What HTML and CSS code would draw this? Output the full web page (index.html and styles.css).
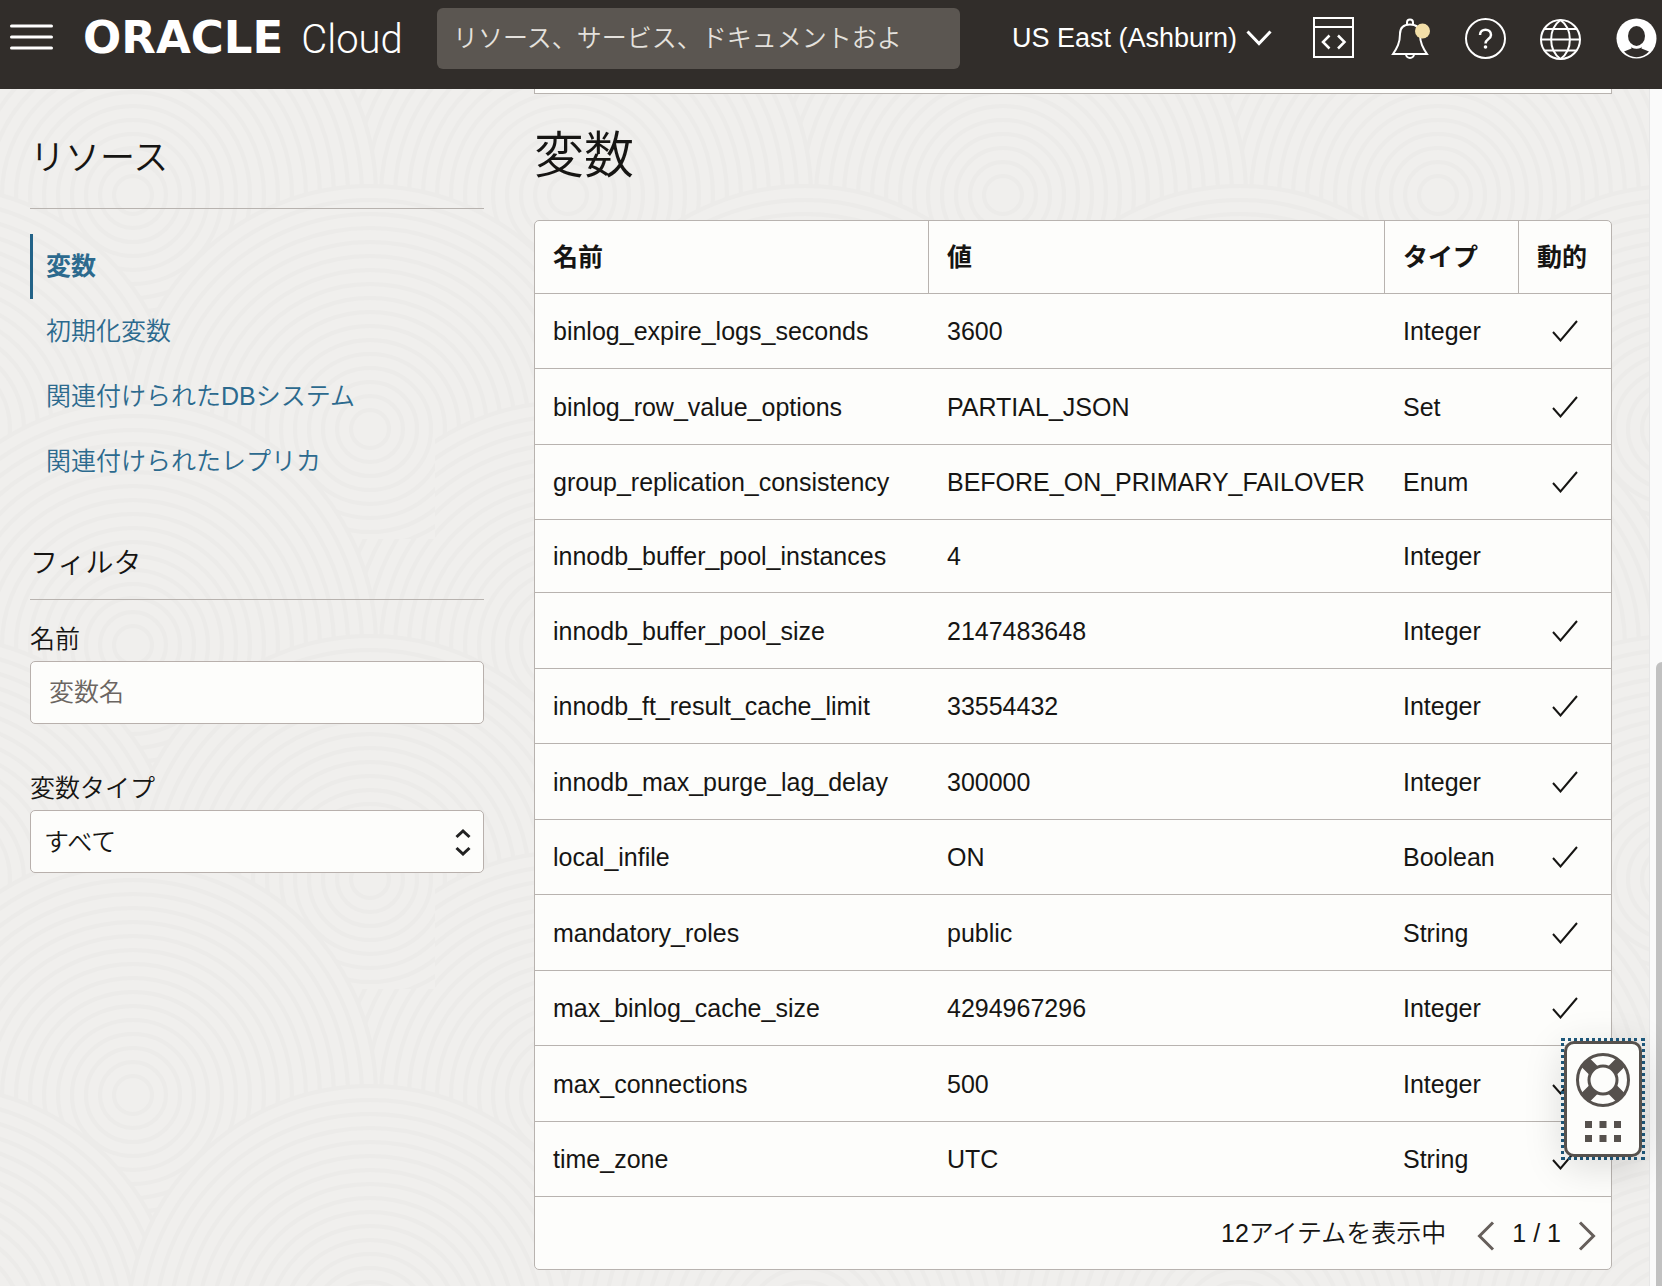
FILE: index.html
```
<!DOCTYPE html>
<html lang="ja">
	<head>
		<meta charset="utf-8" />
		<meta name="viewport" content="width=device-width, initial-scale=1" />
		<title>変数 | Oracle Cloud</title>
		<link rel="stylesheet" href="styles.css">
	</head>
	<body>
		<header class="topbar">
			<button class="icon-button menu" aria-label="メニュー">
				<svg width="43" height="27" viewBox="0 0 43 27" stroke="#fff" stroke-width="3" stroke-linecap="round">
					<path d="M1.5 2h40M1.5 13h40M1.5 24h40" />
				</svg>
			</button>
			<a class="logo" href="#"><span class="logo-oracle">ORACLE</span><span class="logo-cloud">Cloud</span></a>
			<input class="search" type="text" aria-label="検索" placeholder="リソース、サービス、ドキュメントおよ" />
			<div class="tools">
				<button class="region">
					US East (Ashburn)
					<svg width="26" height="16" viewBox="0 0 26 16" fill="none" stroke="#fff" stroke-width="3">
						<path d="M1.500 1.500L13 13.500L24.500 1.500" />
					</svg>
				</button>
				<button class="icon-button" aria-label="開発者ツール">
					<svg width="44" height="44" viewBox="0 0 44 44" fill="none" stroke="#fff" stroke-width="2">
						<path d="M1 2H40V41H1Z" />
						<path d="M1 11H40" />
						<path d="M16.500 19.500L10 26L16.500 32.500M25 19.500L31.500 26L25 32.500" stroke-width="2.500" />
					</svg>
				</button>
				<button class="icon-button" aria-label="お知らせ">
					<svg width="42" height="44" viewBox="0 0 42 44" fill="none" stroke="#fff" stroke-width="2">
						<path d="M17 9V6.500a2.500 2.500 0 0 1 6 0V9" />
						<path d="M10 18C10 11 14 8.500 20 8.500S30 11 30 18C30 27 33 32 37 38H3C7 32 10 27 10 18Z" />
						<path d="M16 38a4 4 0 0 0 8 0" />
						<circle cx="32.500" cy="15" r="7.500" fill="#f3dfa8" stroke="none" />
					</svg>
				</button>
				<button class="icon-button" aria-label="ヘルプ">
					<svg width="42" height="44" viewBox="0 0 42 44" fill="none" stroke="#fff" stroke-width="2">
						<circle cx="20.500" cy="22.500" r="19.500" />
						<path d="M15 19c0-7 11-7 11 0c0 4-5.500 4-5.500 8.500" stroke-width="2.500" />
						<circle cx="20.500" cy="31" r="1.800" fill="#fff" stroke="none" />
					</svg>
				</button>
				<button class="icon-button" aria-label="言語">
					<svg width="42" height="44" viewBox="0 0 42 44" fill="none" stroke="#fff" stroke-width="2">
						<circle cx="20.500" cy="23.500" r="19.500" />
						<path d="M20.500 4C8 13 8 34 20.500 43M20.500 4C33 13 33 34 20.500 43" />
						<path d="M4.500 13H36.500M1 23.500H40M4.500 34.500H36.500" />
					</svg>
				</button>
				<button class="icon-button" aria-label="プロファイル">
					<svg width="42" height="44" viewBox="0 0 42 44">
						<circle cx="21.500" cy="22.500" r="20" fill="#fff" />
						<ellipse cx="21.500" cy="20" rx="8.500" ry="10" fill="#312d2a" />
						<path d="M9 35.500L16.500 32.500V30C19 33 24 33 26.500 30V32.500L34 35.500C27 43 16 43 9 35.500Z" fill="#312d2a" />
						<path d="M16 28C17 33 26 33 27 28" fill="none" stroke="#fff" stroke-width="2" />
					</svg>
				</button>
			</div>
		</header>

		<div class="page">
			<aside class="sidebar">
				<h2 class="resources-title">リソース</h2>
				<nav class="resources">
					<a class="active" href="#">変数</a>
					<a href="#">初期化変数</a>
					<a href="#">関連付けられたDBシステム</a>
					<a href="#">関連付けられたレプリカ</a>
				</nav>
				<h3 class="filter-title">フィルタ</h3>
				<div class="field">
					<label for="name">名前</label>
					<input id="name" type="text" placeholder="変数名" />
				</div>
				<div class="field">
					<label for="type">変数タイプ</label>
					<select id="type">
						<option>すべて</option>
					</select>
				</div>
			</aside>

			<main class="content">
				<div class="panel-end"></div>
				<h1>変数</h1>
				<div class="table-box">
					<table>
						<colgroup>
							<col class="col-name" />
							<col />
							<col class="col-type" />
							<col class="col-dynamic" />
						</colgroup>
						<thead>
							<tr><th>名前</th><th>値</th><th>タイプ</th><th>動的</th></tr>
						</thead>
						<tbody>
							<tr><td>binlog_expire_logs_seconds</td><td>3600</td><td>Integer</td><td><svg class="check" viewBox="0 0 26 22"><path d="M1 12L8.500 20.500L25 1" /></svg></td></tr>
							<tr><td>binlog_row_value_options</td><td>PARTIAL_JSON</td><td>Set</td><td><svg class="check" viewBox="0 0 26 22"><path d="M1 12L8.500 20.500L25 1" /></svg></td></tr>
							<tr><td>group_replication_consistency</td><td>BEFORE_ON_PRIMARY_FAILOVER</td><td>Enum</td><td><svg class="check" viewBox="0 0 26 22"><path d="M1 12L8.500 20.500L25 1" /></svg></td></tr>
							<tr class="static"><td>innodb_buffer_pool_instances</td><td>4</td><td>Integer</td><td></td></tr>
							<tr><td>innodb_buffer_pool_size</td><td>2147483648</td><td>Integer</td><td><svg class="check" viewBox="0 0 26 22"><path d="M1 12L8.500 20.500L25 1" /></svg></td></tr>
							<tr><td>innodb_ft_result_cache_limit</td><td>33554432</td><td>Integer</td><td><svg class="check" viewBox="0 0 26 22"><path d="M1 12L8.500 20.500L25 1" /></svg></td></tr>
							<tr><td>innodb_max_purge_lag_delay</td><td>300000</td><td>Integer</td><td><svg class="check" viewBox="0 0 26 22"><path d="M1 12L8.500 20.500L25 1" /></svg></td></tr>
							<tr><td>local_infile</td><td>ON</td><td>Boolean</td><td><svg class="check" viewBox="0 0 26 22"><path d="M1 12L8.500 20.500L25 1" /></svg></td></tr>
							<tr><td>mandatory_roles</td><td>public</td><td>String</td><td><svg class="check" viewBox="0 0 26 22"><path d="M1 12L8.500 20.500L25 1" /></svg></td></tr>
							<tr><td>max_binlog_cache_size</td><td>4294967296</td><td>Integer</td><td><svg class="check" viewBox="0 0 26 22"><path d="M1 12L8.500 20.500L25 1" /></svg></td></tr>
							<tr><td>max_connections</td><td>500</td><td>Integer</td><td><svg class="check" viewBox="0 0 26 22"><path d="M1 12L8.500 20.500L25 1" /></svg></td></tr>
							<tr><td>time_zone</td><td>UTC</td><td>String</td><td><svg class="check" viewBox="0 0 26 22"><path d="M1 12L8.500 20.500L25 1" /></svg></td></tr>
						</tbody>
					</table>
					<div class="pager">
						<span class="count">12アイテムを表示中</span>
						<button class="icon-button" aria-label="前へ">
							<svg width="18" height="30" viewBox="0 0 18 30" fill="none" stroke="#665f5b" stroke-width="3"><path d="M16 1.500L2.500 15L16 28.500" /></svg>
						</button>
						<span>1 / 1</span>
						<button class="icon-button" aria-label="次へ">
							<svg width="18" height="30" viewBox="0 0 18 30" fill="none" stroke="#665f5b" stroke-width="3"><path d="M2 1.500L15.500 15L2 28.500" /></svg>
						</button>
					</div>
				</div>
			</main>

			<div class="scrollbar"><div class="thumb"></div></div>
		</div>

		<div class="support">
			<button class="support-button" aria-label="サポート">
				<svg width="56" height="90" viewBox="0 0 56 90" fill="none" stroke="#56514d" stroke-width="3">
					<path d="M10.500 10.500L19 19M45.500 10.500L37 19M10.500 45.500L19 37M45.500 45.500L37 37" stroke-width="12" />
					<circle cx="28" cy="28" r="25.500" />
					<circle cx="28" cy="28" r="14" fill="#fdfdfb" />
					<path d="M10 72.500h7M24.500 72.500h7M39 72.500h7M10 86.500h7M24.500 86.500h7M39 86.500h7" stroke-width="7" />
				</svg>
			</button>
		</div>
	</body>
</html>
```
FILE: styles.css
```
* {
	box-sizing: border-box;
}
body {
	margin: 0;
	height: 100vh;
	display: flex;
	flex-direction: column;
	overflow: hidden;
	font-family: "Liberation Sans", "Noto Sans CJK JP", sans-serif;
	font-size: 25px;
	font-weight: 350;
	line-height: 40px;
	color: #161513;
	background-color: #f0efed;
}
h1,
h2,
h3 {
	margin: 0;
	font-weight: 350;
}
button,
input,
select {
	font: inherit;
	color: inherit;
}
button {
	padding: 0;
	border: none;
	background: none;
	cursor: pointer;
}
svg {
	display: block;
}

/* top bar */
.topbar {
	flex: none;
	display: flex;
	align-items: flex-start;
	height: 89px;
	padding: 8px 5px 0 10px;
	background: #312d2a;
	color: #fff;
}
.menu {
	margin-top: 16px;
}
.logo {
	display: flex;
	align-items: baseline;
	gap: 18px;
	width: 354px;
	margin-left: 30px;
	line-height: 60px;
	color: #fff;
	text-decoration: none;
}
.logo-oracle {
	font-family: "DejaVu Sans", sans-serif;
	font-weight: bold;
	font-size: 45px;
}
.logo-cloud {
	font-family: Roboto, sans-serif;
	font-weight: 300;
	font-size: 40px;
}
.search {
	width: 523px;
	height: 61px;
	padding: 0 16px;
	border: none;
	border-radius: 6px;
	background: #5b5651;
}
.search::placeholder {
	color: #e4e1dd;
	opacity: 1;
}
.tools {
	display: flex;
	flex: 1;
	justify-content: flex-end;
	gap: 33px;
	padding-top: 8px;
}
.region {
	display: flex;
	align-items: center;
	gap: 9px;
	height: 44px;
	margin-right: 8px;
	font-size: 27px;
	white-space: nowrap;
}

/* page */
.page {
	flex: 1;
	display: flex;
	min-height: 0;
	background-image: url("data:image/svg+xml,%3Csvg xmlns='http://www.w3.org/2000/svg' xmlns:xlink='http://www.w3.org/1999/xlink' width='435' height='450'%3E%3Cdefs%3E%3Cg id='d' fill='none' stroke='%23ecebe9' stroke-width='4'%3E%3Ccircle r='243' fill='%23f0efed'/%3E%3Ccircle r='229'/%3E%3Ccircle r='215'/%3E%3Ccircle r='201'/%3E%3Ccircle r='187'/%3E%3Ccircle r='173'/%3E%3Ccircle r='159'/%3E%3Ccircle r='145'/%3E%3Ccircle r='131'/%3E%3Ccircle r='117'/%3E%3Ccircle r='103'/%3E%3Ccircle r='89'/%3E%3Ccircle r='75'/%3E%3Ccircle r='61'/%3E%3Ccircle r='47'/%3E%3Ccircle r='33'/%3E%3Ccircle r='19'/%3E%3C/g%3E%3C/defs%3E%3Cuse xlink:href='%23d' x='133' y='-344'/%3E%3Cuse xlink:href='%23d' x='-65' y='-110'/%3E%3Cuse xlink:href='%23d' x='370' y='-110'/%3E%3Cuse xlink:href='%23d' x='-302' y='106'/%3E%3Cuse xlink:href='%23d' x='568' y='106'/%3E%3Cuse xlink:href='%23d' x='133' y='106'/%3E%3Cuse xlink:href='%23d' x='-65' y='340'/%3E%3Cuse xlink:href='%23d' x='370' y='340'/%3E%3Cuse xlink:href='%23d' x='133' y='556'/%3E%3C/svg%3E");
}
.sidebar {
	flex: none;
	width: 484px;
	padding-left: 30px;
}
.resources-title {
	height: 120px;
	padding-top: 20px;
	border-bottom: 1px solid #b8b3af;
	font-size: 35px;
	line-height: 98px;
}
.resources {
	display: flex;
	flex-direction: column;
	margin-top: 25px;
}
.resources a {
	padding-left: 13px;
	border-left: 3px solid transparent;
	line-height: 65px;
	color: #2c6a8e;
	text-decoration: none;
}
.resources .active {
	border-left-color: #226287;
	font-weight: bold;
}
.filter-title {
	margin: 45px 0 19px;
	padding-bottom: 10px;
	border-bottom: 1px solid #b8b3af;
	font-size: 28px;
	line-height: 50px;
}
.field {
	margin-bottom: 44px;
}
.field label {
	display: block;
	margin-bottom: 2px;
}
.field input,
.field select {
	display: block;
	width: 100%;
	height: 63px;
	padding: 0 18px;
	border: 1px solid #b8b0ac;
	border-radius: 5px;
	background-color: #fdfdfb;
}
.field input::placeholder {
	color: #6b6561;
	opacity: 1;
}
.field select {
	appearance: none;
	padding: 0 13px;
	background-image: url("data:image/svg+xml,%3Csvg xmlns='http://www.w3.org/2000/svg' width='16' height='28' fill='none' stroke='%23222' stroke-width='3'%3E%3Cpath d='M1.500 9L8 3L14.500 9M1.500 20L8 26L14.500 20'/%3E%3C/svg%3E");
	background-repeat: no-repeat;
	background-position: right 12px center;
}

.content {
	flex: 1;
	min-width: 0;
	padding: 0 37px 0 50px;
}
.panel-end {
	height: 5px;
	border: 1px solid #b8b3af;
	border-top: none;
	background: #fdfdfb;
}
.content h1 {
	padding-bottom: 2px;
	font-size: 50px;
	line-height: 124px;
}
.table-box {
	border: 1px solid #b8b3af;
	border-radius: 5px;
	background: #fdfdfb;
}
table {
	width: 100%;
	table-layout: fixed;
	border-collapse: separate;
	border-spacing: 0;
}
.col-name {
	width: 394px;
}
.col-type {
	width: 134px;
}
.col-dynamic {
	width: 92px;
}
th,
td {
	padding: 0 0 0 18px;
	border-bottom: 1px solid #b8b3af;
	text-align: left;
	white-space: nowrap;
}
th {
	height: 73px;
	border-right: 1px solid #b8b3af;
	font-weight: bold;
}
th:last-child {
	border-right: none;
}
td {
	height: 75px;
}
tr:nth-child(2) td,
tr:nth-child(2n + 5) td {
	height: 76px;
}
.static td {
	height: 73px;
}
.check {
	width: 26px;
	height: 22px;
	margin-left: 15px;
	fill: none;
	stroke: #161513;
	stroke-width: 2;
}
.pager {
	display: flex;
	align-items: center;
	justify-content: flex-end;
	gap: 17px;
	height: 72px;
	padding-right: 15px;
}
.pager .icon-button {
	margin-top: 5px;
}
.count {
	margin-right: 14px;
}

/* scrollbar along the right edge */
.scrollbar {
	flex: none;
	display: flex;
	flex-direction: column;
	width: 13px;
	padding-left: 6px;
	border-left: 1px solid #e6e6e6;
	background: #fafafa;
}
.thumb {
	flex: 1;
	margin-top: 573px;
	border-top-left-radius: 6px;
	background: #c1c1c1;
}

/* floating support button */
.support {
	position: fixed;
	right: 17px;
	bottom: 126px;
	border: 3px dotted #1f5a7e;
}
.support-button {
	display: flex;
	justify-content: center;
	width: 78px;
	height: 116px;
	padding-top: 8px;
	border: 3px solid #56514d;
	border-radius: 10px;
	background: #fdfdfb;
	box-shadow: 0 8px 40px rgba(0, 0, 0, 0.15);
}
```
